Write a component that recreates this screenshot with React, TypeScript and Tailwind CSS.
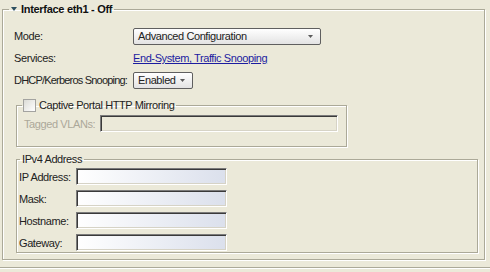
import React from 'react';

const sunken =
  'h-[17px] border border-t-[#7b7b7b] border-l-[#7b7b7b] border-b-white border-r-white shadow-[inset_1px_1px_0_#3a3a3a,inset_-1px_-1px_0_#d6d3c6]';

const etched =
  'border border-[#aba998] shadow-[inset_1px_1px_0_#ffffff,1px_1px_0_#ffffff]';

function Arrow() {
  return (
    <svg width="5" height="3" viewBox="0 0 5 3" className="shrink-0">
      <path d="M0 0h5L2.5 3z" fill="#5a5a5a" />
    </svg>
  );
}

function Select({ value, width }: { value: string; width: string }) {
  return (
    <div
      className={`${width} flex h-[17px] items-center justify-between rounded-[2px] border border-[#5f5f5f] bg-gradient-to-b from-white to-[#e3e3e3] pl-[4px] pr-[7px]`}
    >
      <span className="whitespace-nowrap">{value}</span>
      <Arrow />
    </div>
  );
}

function Field({ label }: { label: string }) {
  return (
    <div className="flex items-center">
      <span className="w-[59px] whitespace-nowrap pl-[2px]">{label}</span>
      <div className={`${sunken} w-[151px] bg-gradient-to-r from-white to-[#dbe0ec]`} />
    </div>
  );
}

export default function App() {
  return (
    <div className="h-[272px] w-[490px] overflow-hidden bg-[#ebe9d9] font-['Liberation_Sans',Arial,sans-serif] text-[11px] leading-[14px] tracking-[-0.4px] text-[#222222]">
      <div className="pl-[2px] pt-[2px]">
        <fieldset className={`${etched} w-[483px] pb-[6px]`}>
          <legend className="ml-[6px] flex items-center gap-[4px] px-[2px] font-bold tracking-[-0.3px] text-[#111]">
            <svg width="6" height="4" viewBox="0 0 6 4">
              <path d="M0 0h6L3 4z" fill="#2e5060" />
            </svg>
            <span>Interface eth1 - Off</span>
          </legend>

          <div className="mt-[9px] grid grid-cols-[119px_1fr] whitespace-nowrap pl-[11px]">
            <div className="flex h-[22px] items-center">Mode:</div>
            <div className="flex h-[22px] items-center">
              <Select value="Advanced Configuration" width="w-[188px]" />
            </div>
            <div className="flex h-[22px] items-center">Services:</div>
            <div className="flex h-[22px] items-center">
              <a href="#" className="text-[#1c1ca0] underline">
                End-System, Traffic Snooping
              </a>
            </div>
            <div className="flex h-[22px] items-center tracking-[-0.8px]">DHCP/Kerberos Snooping:</div>
            <div className="flex h-[22px] items-center">
              <Select value="Enabled" width="w-[60px]" />
            </div>
          </div>

          <fieldset className={`${etched} ml-[13px] mt-[7px] w-[331px] pb-[14px]`}>
            <legend className="ml-[5px] flex items-center gap-[3px] px-[1px]">
              <span className="h-[13px] w-[13px] border border-[#a3a3a0] bg-gradient-to-br from-[#dcdcd6] to-white" />
              <span>Captive Portal HTTP Mirroring</span>
            </legend>
            <div className="mt-[3px] flex items-center pl-[7px]">
              <span className="w-[76px] whitespace-nowrap text-[#aca899]">Tagged VLANs:</span>
              <div className={`${sunken} w-[238px] bg-[#ebe9d9]`} />
            </div>
          </fieldset>

          <fieldset className={`${etched} ml-[13px] mt-[5px] w-[462px] pb-[1px]`}>
            <legend className="ml-[3px] px-[2px]">IPv4 Address</legend>
            <div className="mt-[2px] flex flex-col gap-[5px]">
              <Field label="IP Address:" />
              <Field label="Mask:" />
              <Field label="Hostname:" />
              <Field label="Gateway:" />
            </div>
          </fieldset>
        </fieldset>
      </div>
      <div className="mt-[7px] border-t border-[#aba998] shadow-[0_1px_0_#ffffff]" />
    </div>
  );
}
